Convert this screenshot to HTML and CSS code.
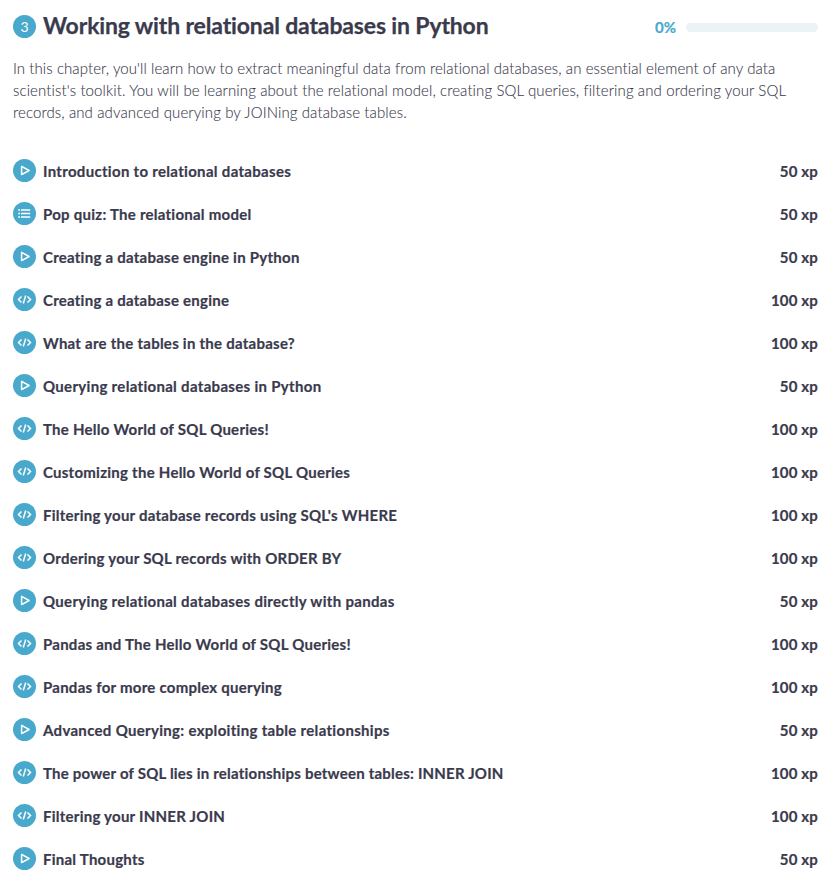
FILE: index.html
```html
<!DOCTYPE html>
<html lang="en">
<head>
<meta charset="utf-8">
<title>Working with relational databases in Python</title>
<link rel="stylesheet" href="styles.css">
</head>
<body>
<svg class="sprite" aria-hidden="true">
  <symbol id="video" viewBox="0 0 23 23"><path d="M8.6 7.4v8.2l7.5-4.1z" fill="none" stroke="#fff" stroke-width="1.5" stroke-linejoin="round"/></symbol>
  <symbol id="quiz" viewBox="0 0 23 23"><path d="M5.2 8h1.8M5.2 11.5h1.8M5.2 15h1.8M8 8h9.2M8 11.5h9.2M8 15h9.2" fill="none" stroke="#fff" stroke-width="1.4"/></symbol>
  <symbol id="code" viewBox="0 0 23 23"><path d="M8.5 8.5l-3 3 3 3M14.5 8.5l3 3-3 3M12.7 7.5l-2.4 8" fill="none" stroke="#fff" stroke-width="1.5"/></symbol>
</svg>
<main class="chapter">
  <header class="head">
    <span class="number">3</span>
    <h1 class="title">Working with relational databases in Python</h1>
    <span class="percent">0%</span>
    <span class="track"></span>
  </header>
  <p class="intro">In this chapter, you'll learn how to extract meaningful data from relational databases, an essential element of any data<br><span class="loose">scientist's toolkit. You will be learning about the relational model, creating SQL queries, filtering and ordering your SQL<br>records, and advanced querying by JOINing database tables.</span></p>
  <ul class="list">
    <li class="row"><svg class="icon"><use href="#video"/></svg><span class="name wide">Introduction to relational databases</span><span class="xp">50 xp</span></li>
    <li class="row"><svg class="icon"><use href="#quiz"/></svg><span class="name">Pop quiz: The relational model</span><span class="xp">50 xp</span></li>
    <li class="row"><svg class="icon"><use href="#video"/></svg><span class="name">Creating a database engine in Python</span><span class="xp">50 xp</span></li>
    <li class="row"><svg class="icon"><use href="#code"/></svg><span class="name">Creating a database engine</span><span class="xp">100 xp</span></li>
    <li class="row"><svg class="icon"><use href="#code"/></svg><span class="name">What are the tables in the database?</span><span class="xp">100 xp</span></li>
    <li class="row"><svg class="icon"><use href="#video"/></svg><span class="name wide">Querying relational databases in Python</span><span class="xp">50 xp</span></li>
    <li class="row"><svg class="icon"><use href="#code"/></svg><span class="name">The Hello World of SQL Queries!</span><span class="xp">100 xp</span></li>
    <li class="row"><svg class="icon"><use href="#code"/></svg><span class="name">Customizing the Hello World of SQL Queries</span><span class="xp">100 xp</span></li>
    <li class="row"><svg class="icon"><use href="#code"/></svg><span class="name">Filtering your database records using SQL's WHERE</span><span class="xp">100 xp</span></li>
    <li class="row"><svg class="icon"><use href="#code"/></svg><span class="name">Ordering your SQL records with ORDER BY</span><span class="xp">100 xp</span></li>
    <li class="row"><svg class="icon"><use href="#video"/></svg><span class="name wide">Querying relational databases directly with pandas</span><span class="xp">50 xp</span></li>
    <li class="row"><svg class="icon"><use href="#code"/></svg><span class="name">Pandas and The Hello World of SQL Queries!</span><span class="xp">100 xp</span></li>
    <li class="row"><svg class="icon"><use href="#code"/></svg><span class="name">Pandas for more complex querying</span><span class="xp">100 xp</span></li>
    <li class="row"><svg class="icon"><use href="#video"/></svg><span class="name wide">Advanced Querying: exploiting table relationships</span><span class="xp">50 xp</span></li>
    <li class="row"><svg class="icon"><use href="#code"/></svg><span class="name snug">The power of SQL lies in relationships between tables: INNER JOIN</span><span class="xp">100 xp</span></li>
    <li class="row"><svg class="icon"><use href="#code"/></svg><span class="name">Filtering your INNER JOIN</span><span class="xp">100 xp</span></li>
    <li class="row"><svg class="icon"><use href="#video"/></svg><span class="name">Final Thoughts</span><span class="xp">50 xp</span></li>
  </ul>
</main>
</body>
</html>
```
FILE: styles.css
```css
* { box-sizing: border-box; }
body { margin: 0; background: #fff; color: #3a3a4d; font-family: Lato, sans-serif; font-variant-ligatures: none; }
.sprite { display: none; }
.chapter { padding: 10px 7px 0 13px; }
.head { display: flex; align-items: center; height: 32px; }
.number { width: 23px; height: 23px; border-radius: 50%; background: #48a9cc; color: #fff; font-size: 14px; line-height: 23px; text-align: center; }
.title { flex: 1; margin: -2px 0 0 7px; font-size: 23px; line-height: 32px; font-weight: 700; letter-spacing: -0.145px; white-space: nowrap; -webkit-text-stroke: 0.25px currentColor; }
.percent { color: #48a9cc; font-size: 15px; font-weight: 700; margin: 2px 10px 0 0; -webkit-text-stroke: 0.2px currentColor; }
.track { width: 132px; height: 9px; margin-top: 2px; border-radius: 5px; background: #ebf3f7; }
.intro { margin: 15px 0 0; font-size: 15px; line-height: 22px; font-weight: 300; letter-spacing: 0.075px; white-space: nowrap; color: #3a3a4d; -webkit-text-stroke: 0.1px currentColor; }
.loose { letter-spacing: 0.11px; }
.list { list-style: none; margin: 26px 0 0; padding: 0; }
.row { display: flex; align-items: center; height: 43px; font-size: 15px; font-weight: 700; -webkit-text-stroke: 0.2px currentColor; }
.icon { width: 23px; height: 23px; border-radius: 50%; background: #48a9cc; margin-right: 7px; -webkit-text-stroke: 0; }
.name { flex: 1; letter-spacing: 0.25px; }
.wide { letter-spacing: 0.31px; }
.snug { letter-spacing: 0.21px; }
.xp { letter-spacing: 0.15px; }
```
